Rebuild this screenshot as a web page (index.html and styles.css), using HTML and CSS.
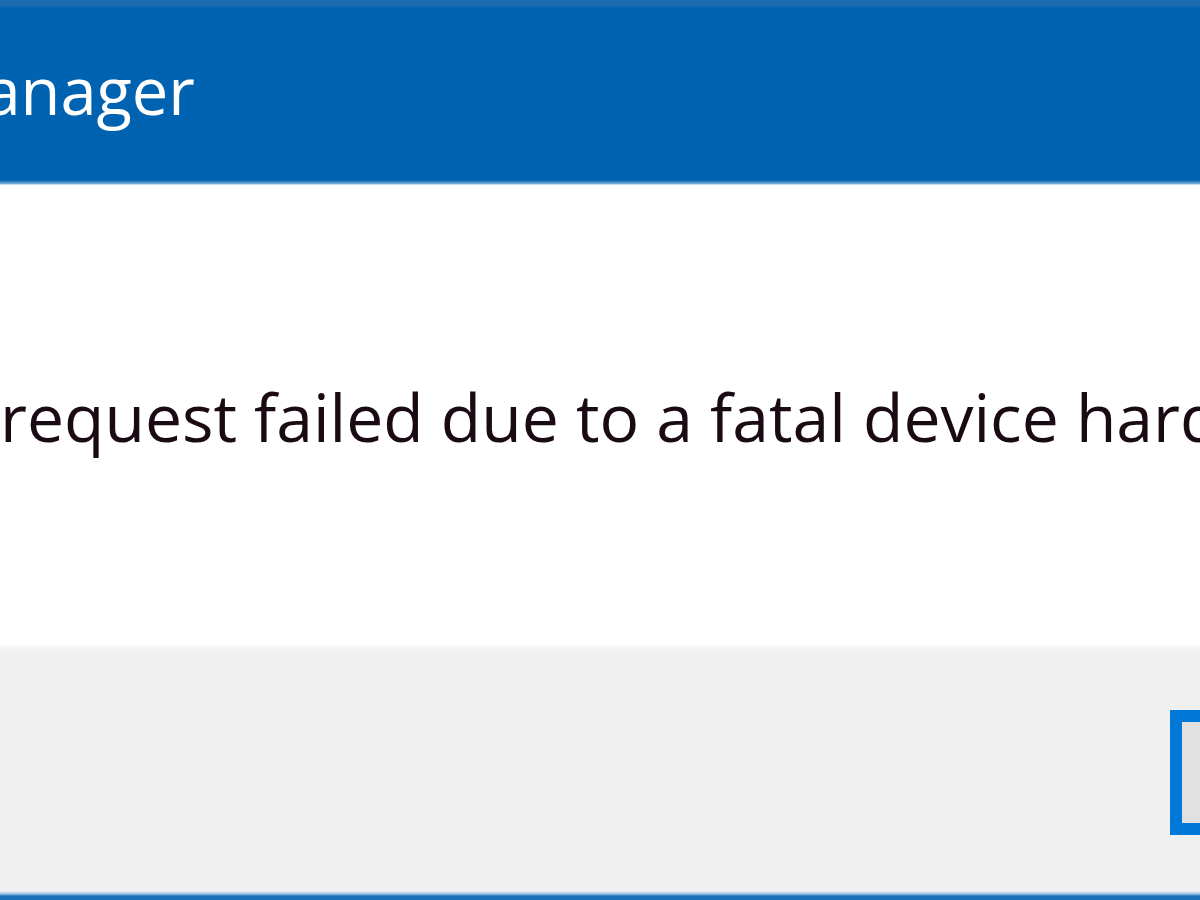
FILE: index.html
```html
<!DOCTYPE html>
<html lang="en">
<head>
    <meta charset="UTF-8">
    <meta name="viewport" content="width=device-width, initial-scale=1.0">
    <title>Device Manager</title>
    <link rel="stylesheet" href="styles.css">
</head>
<body>
<div class="dialog">
    <div class="titlebar">
        <span class="title">Manager</span>
    </div>

    <div class="content">
        <p class="message">request failed due to a fatal device hardware error.</p>
    </div>

    <div class="footer">
        <button type="button" class="ok-button">OK</button>
    </div>
</div>
</body>
</html>
```

FILE: styles.css
```css
body {
    margin: 0;
    background-color: #ffffff;
    font-family: 'Open Sans', 'Noto Sans', sans-serif;
    overflow: hidden;
}

.dialog {
    width: 1200px;
    height: 900px;
    display: flex;
    flex-direction: column;
    overflow: hidden;
}

.titlebar {
    height: 185px;
    flex-shrink: 0;
    background: linear-gradient(to bottom, #1c6caf 0, #1c6caf 5px, #0063b1 8px, #0063b1 180px, #3d86c4 182px, #8ab8df 184px, #ffffff 185px);
    display: flex;
    align-items: center;
    overflow: hidden;
}

.title {
    color: #ffffff;
    font-size: 65px;
    margin-left: -74px;
    margin-top: -6px;
    white-space: nowrap;
}

.content {
    height: 460px;
    flex-shrink: 0;
    background-color: #ffffff;
    display: flex;
    align-items: center;
    overflow: hidden;
}

.message {
    margin: 0;
    padding-top: 2px;
    color: #1a0a14;
    font-size: 66px;
    white-space: nowrap;
}

.footer {
    flex: 1;
    background: linear-gradient(to bottom, #fafafa 0, #f0f0f0 8px, #f0f0f0 246px, #b9d3ea 248px, #5e9dd1 250px, #1a6fb8 251px);
    display: flex;
    justify-content: flex-end;
    align-items: flex-start;
    padding-top: 65px;
    overflow: hidden;
}

.ok-button {
    width: 220px;
    height: 125px;
    margin-right: -190px;
    flex-shrink: 0;
    background-color: #e1e1e1;
    border: 12px solid #0078d7;
    font-family: inherit;
    font-size: 60px;
    color: #000000;
}
```
